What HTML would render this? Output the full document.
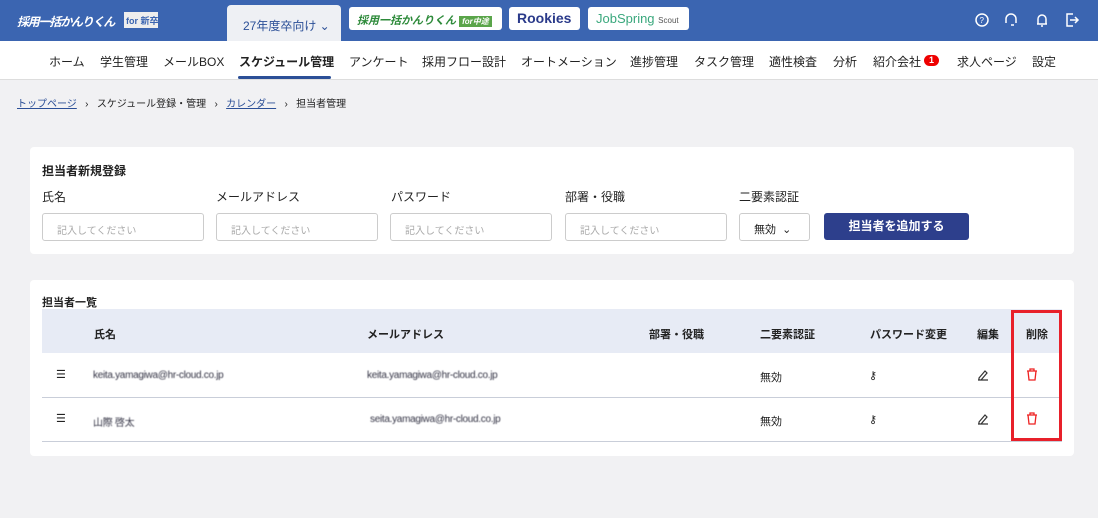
<!DOCTYPE html><html><head><meta charset="utf-8"><style>
*{box-sizing:border-box;margin:0;padding:0}
body{width:1098px;height:518px;overflow:hidden;background:#f1f1f3;font-family:"Liberation Sans","Noto Sans CJK JP",sans-serif;color:#222;position:relative}
.hd{position:absolute;left:0;top:0;width:1098px;height:41px;background:#3b65b1}
.ab{position:absolute}
.nav{position:absolute;top:41px;left:0;width:1098px;height:39px;background:#fff;border-bottom:1px solid #ddd;font-size:12px}
.nav span{position:absolute;top:12px;white-space:nowrap}
.card{position:absolute;background:#fff;border-radius:4px}
.lbl{position:absolute;font-size:12px}
.inp{position:absolute;height:28px;width:162px;border:1px solid #ccc;border-radius:3px;font-size:10px;color:#aaa;padding:8px 0 0 14px}
.th{position:absolute;font-size:11px;font-weight:bold;top:326px}
.td{position:absolute;font-size:11px}
.blur{position:absolute;font-size:10px;color:#334;letter-spacing:-.3px;filter:blur(.4px)}
</style></head><body>
<div class="hd"></div>
<div class="ab" style="left:17px;top:13px;color:#fff;font-weight:bold;font-style:italic;font-size:12px;letter-spacing:-1.2px;white-space:nowrap">採用一括かんりくん</div>
<div class="ab" style="left:124px;top:12px;width:34px;height:16px;background:#eee;color:#3b65b1;font-size:9px;font-weight:bold;padding:2px 2px;white-space:nowrap;overflow:hidden">for 新卒</div>
<div class="ab" style="left:227px;top:5px;width:114px;height:36px;background:#eef0f4;border-radius:4px 4px 0 0;color:#2b4f97;font-size:12px;padding:12px 0 0 16px">27年度卒向け ⌄</div>
<div class="ab" style="left:349px;top:7px;width:153px;height:23px;background:#fff;border-radius:3px;color:#2d8a3a;font-weight:bold;font-style:italic;font-size:11px;padding:5px 0 0 8px;white-space:nowrap">採用一括かんりくん <span style="background:#5aa54a;color:#fff;font-size:8px;padding:1px 3px">for中途</span></div>
<div class="ab" style="left:509px;top:7px;width:71px;height:23px;background:#fff;border-radius:3px;color:#2a3a8a;font-weight:bold;font-size:14px;padding:3px 0 0 8px">Rookies</div>
<div class="ab" style="left:588px;top:7px;width:101px;height:23px;background:#fff;border-radius:3px;color:#3aa87d;font-size:13px;padding:4px 0 0 8px;white-space:nowrap">JobSpring <span style="font-size:8px;color:#555">Scout</span></div>
<svg class="ab" style="left:970px;top:10px" width="110" height="20" fill="none" stroke="#fff" stroke-width="1.5"><circle cx="12" cy="10" r="6"/><text x="9.5" y="13" font-size="8" fill="#fff" stroke="none">?</text><path d="M36 11v-2a5 5 0 0110 0v2M36 9v4M46 9v4M44 15h-3"/><path d="M68 14V9a4 4 0 018 0v5h1H67zM71 16h2"/><path d="M103 4h-6v12h6M100 10h8M105 7l3 3-3 3"/></svg>
<div class="nav">
<span style="left:49px">ホーム</span><span style="left:100px">学生管理</span><span style="left:163px">メールBOX</span><span style="left:239px;font-weight:bold">スケジュール管理</span><span style="left:349px">アンケート</span><span style="left:422px">採用フロー設計</span><span style="left:521px">オートメーション</span><span style="left:630px">進捗管理</span><span style="left:694px">タスク管理</span><span style="left:769px">適性検査</span><span style="left:833px">分析</span><span style="left:873px">紹介会社</span><span style="left:924px;top:14px;width:15px;height:11px;background:#e00;color:#fff;border-radius:6px;font-size:9px;font-weight:bold;text-align:center;line-height:11px">1</span><span style="left:957px">求人ページ</span><span style="left:1032px">設定</span>
<div style="position:absolute;left:238px;top:35px;width:93px;height:3px;background:#2b4f97;border-radius:2px"></div>
</div>
<div class="ab" style="left:17px;top:95px;font-size:10px;white-space:nowrap"><span style="color:#2b4f97;text-decoration:underline">トップページ</span>&nbsp;&nbsp;&nbsp;›&nbsp;&nbsp;&nbsp;スケジュール登録・管理&nbsp;&nbsp;&nbsp;›&nbsp;&nbsp;&nbsp;<span style="color:#2b4f97;text-decoration:underline">カレンダー</span>&nbsp;&nbsp;&nbsp;›&nbsp;&nbsp;&nbsp;担当者管理</div>
<div class="card" style="left:30px;top:147px;width:1044px;height:107px"></div>
<div class="lbl" style="left:42px;top:162px;font-weight:bold">担当者新規登録</div>
<div class="lbl" style="left:42px;top:188px">氏名</div><div class="lbl" style="left:216px;top:188px">メールアドレス</div><div class="lbl" style="left:391px;top:188px">パスワード</div><div class="lbl" style="left:565px;top:188px">部署・役職</div><div class="lbl" style="left:739px;top:188px">二要素認証</div>
<div class="inp" style="left:42px;top:213px">記入してください</div><div class="inp" style="left:216px;top:213px">記入してください</div><div class="inp" style="left:390px;top:213px">記入してください</div><div class="inp" style="left:565px;top:213px">記入してください</div>
<div class="inp" style="left:739px;top:213px;width:71px;color:#222;font-size:11px;padding-top:7px">無効 &nbsp;⌄</div>
<div class="ab" style="left:824px;top:213px;width:145px;height:27px;background:#2d3f8c;border-radius:3px;color:#fff;font-size:12px;font-weight:bold;text-align:center;line-height:27px">担当者を追加する</div>
<div class="card" style="left:30px;top:280px;width:1044px;height:176px"></div>
<div class="lbl" style="left:42px;top:294px;font-weight:bold;font-size:11px">担当者一覧</div>
<div class="ab" style="left:42px;top:309px;width:1020px;height:44px;background:#e7ebf5"></div>
<div class="th" style="left:94px">氏名</div><div class="th" style="left:367px">メールアドレス</div><div class="th" style="left:649px">部署・役職</div><div class="th" style="left:760px">二要素認証</div><div class="th" style="left:870px">パスワード変更</div><div class="th" style="left:977px">編集</div><div class="th" style="left:1026px">削除</div>
<div class="ab" style="left:42px;top:397px;width:1020px;height:1px;background:#c9ced9"></div>
<div class="ab" style="left:42px;top:441px;width:1020px;height:1px;background:#c9ced9"></div>
<div class="td" style="left:56px;top:368px">☰</div><div class="td" style="left:56px;top:412px">☰</div>
<div class="blur" style="left:93px;top:370px">keita.yamagiwa@hr-cloud.co.jp</div><div class="blur" style="left:367px;top:370px">keita.yamagiwa@hr-cloud.co.jp</div>
<div class="blur" style="left:93px;top:414px">山際 啓太</div><div class="blur" style="left:370px;top:414px">seita.yamagiwa@hr-cloud.co.jp</div>
<div class="td" style="left:760px;top:369px">無効</div><div class="td" style="left:760px;top:413px">無効</div>
<div class="td" style="left:869px;top:369px">⚷</div><div class="td" style="left:869px;top:413px">⚷</div>
<svg class="ab" style="left:976px;top:368px" width="14" height="60" fill="none" stroke="#333" stroke-width="1.2"><path d="M3 10l6-7 2 2-6 7H3zM2 12h10M3 54l6-7 2 2-6 7H3zM2 56h10"/></svg>
<svg class="ab" style="left:1026px;top:368px" width="12" height="60" fill="none" stroke="#e22" stroke-width="1.3"><path d="M1 3h10M4 3V1h4v2M2 3l1 9h6l1-9M1 47h10M4 47v-2h4v2M2 47l1 9h6l1-9"/></svg>
<div class="ab" style="left:1011px;top:310px;width:51px;height:131px;border:3px solid #e8202a"></div>
</body></html>
